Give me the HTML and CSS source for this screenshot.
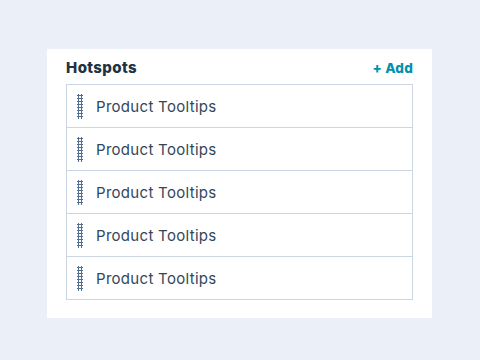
FILE: index.html
```html
<!DOCTYPE html>
<html lang="en">
<head>
    <meta charset="UTF-8">
    <meta name="viewport" content="width=device-width, initial-scale=1.0">
    <title>Hotspots</title>
    <link rel="stylesheet" href="styles.css">
</head>
<body>
    <div class="panel">
        <div class="panel-header">
            <h2>Hotspots</h2>
            <a href="#" class="add-link">+ Add</a>
        </div>
        <ul class="hotspot-list">
            <li class="hotspot"><span class="grip"></span>Product Tooltips</li>
            <li class="hotspot"><span class="grip"></span>Product Tooltips</li>
            <li class="hotspot"><span class="grip"></span>Product Tooltips</li>
            <li class="hotspot"><span class="grip"></span>Product Tooltips</li>
            <li class="hotspot"><span class="grip"></span>Product Tooltips</li>
        </ul>
    </div>
</body>
</html>
```

FILE: styles.css
```css
body {
    margin: 0;
    height: 360px;
    background: #eaeff8;
    font-family: 'Inter', sans-serif;
    color: #33475b;
}

.panel {
    position: relative;
    top: 49px;
    margin-left: 47px;
    width: 385px;
    height: 269px;
    box-sizing: border-box;
    background: #fff;
    padding: 9px 19px 0 19px;
}

.panel-header {
    display: flex;
    justify-content: space-between;
    align-items: baseline;
    height: 26px;
}

.panel-header h2 {
    margin: 0;
    font-size: 15px;
    font-weight: 800;
    letter-spacing: 0.4px;
    color: #213343;
}

.add-link {
    font-size: 13.5px;
    font-weight: 800;
    letter-spacing: 0.2px;
    color: #0091ae;
    text-decoration: none;
}

.hotspot-list {
    list-style: none;
    margin: 0;
    padding: 0;
    border: 1px solid #cbd6e2;
}

.hotspot {
    display: flex;
    align-items: center;
    height: 42px;
    padding-left: 10px;
    font-size: 15px;
    letter-spacing: 0.3px;
    border-top: 1px solid #cbd6e2;
}

.hotspot:first-child {
    border-top: none;
}

.grip {
    width: 6px;
    height: 25px;
    margin-right: 13px;
    background-image: radial-gradient(circle, #516f90 1.1px, transparent 1.3px);
    background-size: 3px 3px;
}
```
